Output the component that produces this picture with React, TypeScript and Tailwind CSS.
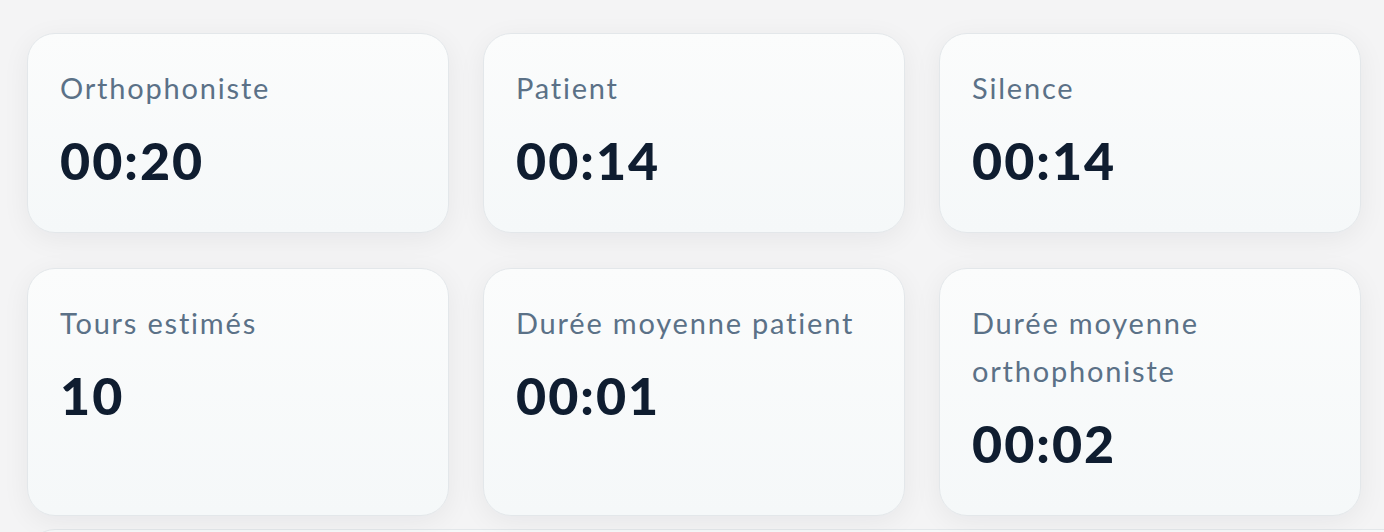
type Stat = {
  label: string;
  value: string;
};

const stats: Stat[] = [
  { label: "Orthophoniste", value: "00:20" },
  { label: "Patient", value: "00:14" },
  { label: "Silence", value: "00:14" },
  { label: "Tours estimés", value: "10" },
  { label: "Durée moyenne patient", value: "00:01" },
  { label: "Durée moyenne orthophoniste", value: "00:02" },
];

function StatCard({ label, value }: Stat) {
  return (
    <div className="flex flex-col rounded-[28px] border border-[#e3e7ea] bg-gradient-to-b from-[#fbfcfc] to-[#f5f8f9] px-8 pt-[30px] pb-[36px] shadow-[0_6px_28px_rgba(15,23,42,0.06)]">
      <div className="text-[29px] leading-[48px] tracking-[1.8px] text-[#5b7187]">
        {label}
      </div>
      <div className="mt-3 text-[52px] leading-[72px] font-black tracking-[2px] text-[#0f1d30]">
        {value}
      </div>
    </div>
  );
}

export default function App() {
  return (
    <div
      className="h-[532px] overflow-hidden bg-[#f4f4f5]"
      style={{ fontFamily: "Lato, 'Noto Sans', sans-serif" }}
    >
      <div className="grid grid-cols-3 gap-x-[34px] gap-y-[35px] pl-[27px] pr-[23px] pt-[33px]">
        {stats.map((stat) => (
          <StatCard key={stat.label} label={stat.label} value={stat.value} />
        ))}
      </div>
      {/* next panel, only its top edge shows */}
      <div className="mt-[13px] ml-[27px] -mr-[40px] h-[120px] rounded-[28px] border border-[#e3e7ea] bg-[#f6f8f9]" />
    </div>
  );
}
